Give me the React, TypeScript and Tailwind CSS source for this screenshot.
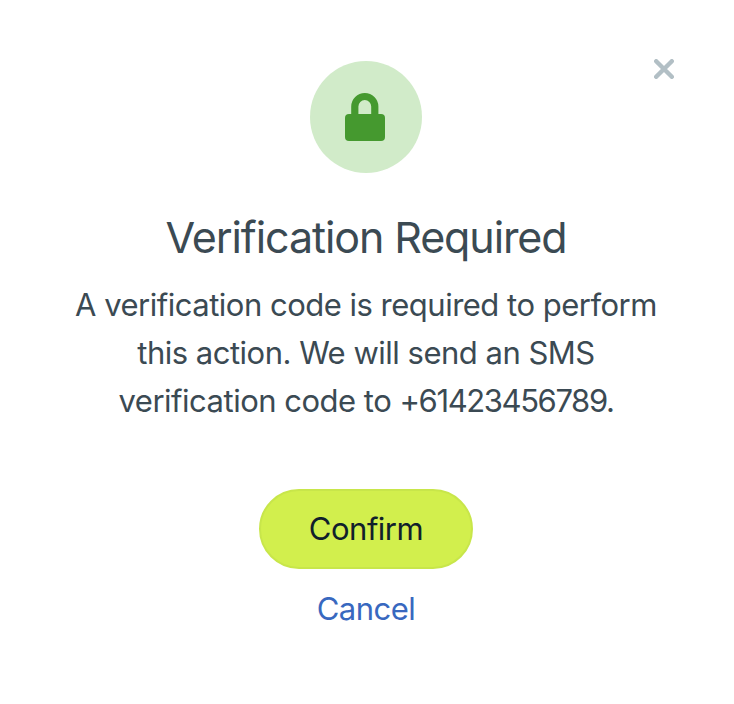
const lineClass = "block whitespace-nowrap";

const LockIcon = () => (
  <svg viewBox="0 0 40 48" className="mr-0.5 h-12 w-10" aria-hidden="true">
    <path
      d="M6.2 22V13.5a13.6 13.5 0 0 1 27.2 0V22h-7.2v-8.5a6.4 6.5 0 0 0-12.8 0V22z"
      fill="#45992f"
    />
    <rect y="21" width="40" height="27" rx="4" fill="#45992f" />
  </svg>
);

const CloseIcon = () => (
  <svg viewBox="0 0 20 20" className="h-5 w-5" aria-hidden="true">
    <path
      d="M2.2 2.2l15.6 15.6M17.8 2.2L2.2 17.8"
      stroke="#b2bfc5"
      strokeWidth="4.4"
      strokeLinecap="round"
    />
  </svg>
);

export default function App() {
  return (
    <main
      role="dialog"
      className="relative flex h-[704px] w-[732px] flex-col items-center bg-white pt-[61px] font-['Inter',sans-serif] text-[#3b4a53]"
    >
      <button aria-label="Close" className="absolute top-[59px] right-[58px]">
        <CloseIcon />
      </button>
      <div className="flex h-28 w-28 items-center justify-center rounded-full bg-[#d1ebc9]">
        <LockIcon />
      </div>
      <h1 className="mt-[35px] text-[43px] leading-[58px] tracking-[-1.1px] whitespace-nowrap">
        Verification Required
      </h1>
      <p className="mt-[15px] text-center text-[31px] leading-[48px] tracking-[-0.5px]">
        <span className={lineClass}>A verification code is required to perform</span>
        <span className={lineClass}>this action. We will send an SMS</span>
        <span className={lineClass}>
          verification code to{" "}
          <span className="tracking-[-1.4px]">+61423456789.</span>
        </span>
      </p>
      <button className="mt-16 h-20 w-[214px] rounded-full border-2 border-[#c8e64a] bg-[#d2ef4d] text-[31px] tracking-[-0.5px] text-[#10202b]">
        Confirm
      </button>
      <button className="mt-4 text-[31px] leading-12 tracking-[-0.5px] text-[#3868bf]">
        Cancel
      </button>
    </main>
  );
}
